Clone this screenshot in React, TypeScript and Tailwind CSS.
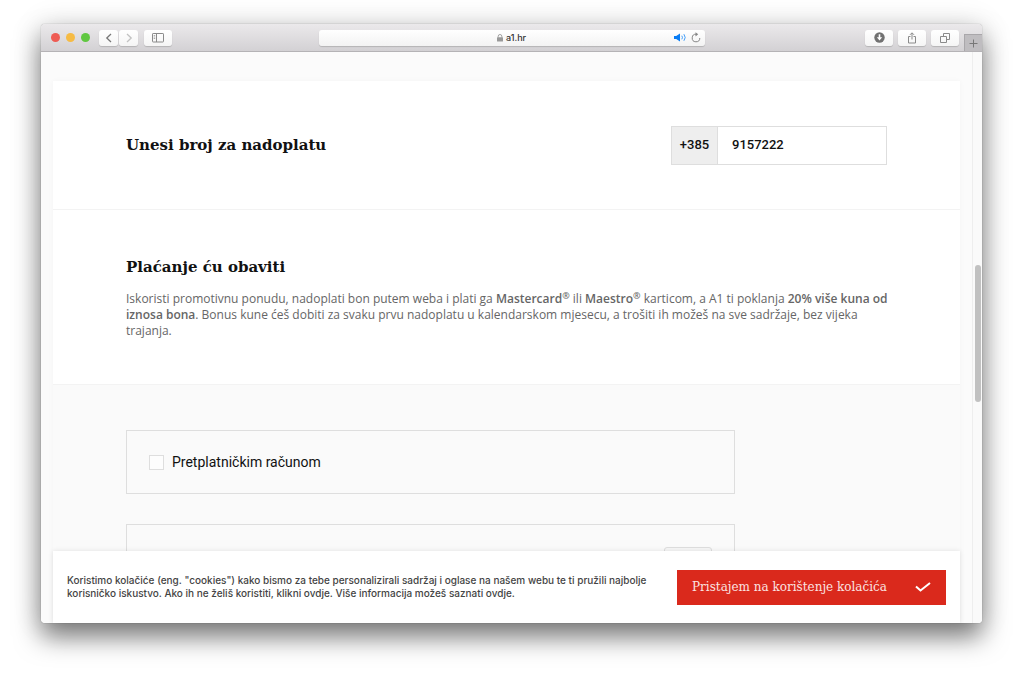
/* A1 top-up page shown inside a desktop browser window */
import { useState } from 'react';
import type { ReactNode } from 'react';

interface ToolbarButtonProps {
  label: string;
  className?: string;
  children: ReactNode;
}

function ToolbarButton({ label, className = 'w-7', children }: ToolbarButtonProps) {
  return (
    <button
      type="button"
      aria-label={label}
      className={`flex h-4 items-center justify-center rounded-[3px] bg-linear-to-b from-white to-[#f5f5f5] text-[#8a8a8a] shadow-[0_1px_1px_rgba(0,0,0,0.16)] ${className}`}
    >
      {children}
    </button>
  );
}

function Toolbar() {
  return (
    <header className="relative grid h-7 shrink-0 grid-cols-[1fr_386px_1fr] items-center rounded-t-[4px] border-b border-[#b5b3b6] bg-linear-to-b from-[#ebe9eb] to-[#d3d1d4]">
      {/* Window controls and history */}
      <div className="flex items-center pl-[10px]">
        <div className="flex gap-[6px]">
          <span className="size-[9px] rounded-full bg-[#ee5b53]"></span>
          <span className="size-[9px] rounded-full bg-[#f6bb44]"></span>
          <span className="size-[9px] rounded-full bg-[#60c741]"></span>
        </div>
        <div className="ml-[9px] flex gap-px">
          <ToolbarButton label="Back" className="w-[19px]">
            <svg width="8" height="10" viewBox="0 0 8 10" fill="none" stroke="#777" strokeWidth="1.3">
              <path d="M6 1 1.8 5 6 9" />
            </svg>
          </ToolbarButton>
          <ToolbarButton label="Forward" className="w-[19px]">
            <svg width="8" height="10" viewBox="0 0 8 10" fill="none" stroke="#c2c2c2" strokeWidth="1.3">
              <path d="M2 1 6.200 5 2 9" />
            </svg>
          </ToolbarButton>
        </div>
        <div className="ml-[6px] flex">
          <ToolbarButton label="Sidebar">
            <svg width="12" height="10" viewBox="0 0 12 10" fill="none" stroke="currentColor">
              <rect x="0.5" y="0.5" width="11" height="8.500" rx="0.6" />
              <path d="M4.500 0.500v8.500" />
              <path d="M1.700 2.500h1.500M1.700 4h1.500M1.700 5.500h1.500" strokeWidth="0.7" />
            </svg>
          </ToolbarButton>
        </div>
      </div>

      {/* Address field */}
      <div className="relative flex h-4 items-center justify-center gap-[3px] rounded-[3px] bg-linear-to-b from-white to-[#f3f3f3] font-['Inter',sans-serif] text-[9px] font-medium text-[#333] shadow-[0_1px_1px_rgba(0,0,0,0.16)]">
        <svg width="6" height="8" viewBox="0 0 6 8">
          <rect y="3.200" width="6" height="4.300" rx="0.5" fill="#999" />
          <path d="M1.200 3.500V2.300a1.800 1.800 0 0 1 3.600 0v1.200" fill="none" stroke="#999" strokeWidth="0.9" />
        </svg>
        <span>a1.hr</span>
        <div className="absolute right-1 flex items-center gap-1">
          <svg width="13" height="9" viewBox="0 0 13 9" fill="none" stroke="#2d93f8">
            <path d="M0 3h2.200L6 0.600v7.800L2.200 6H0z" fill="#0a7df5" stroke="none" />
            <path d="M7.800 2.700q1.300 1.800 0 3.600M9.900 1.200q2.600 3.300 0 6.600" strokeWidth="0.9" />
          </svg>
          <svg width="10" height="11" viewBox="0 0 10 11" fill="none" stroke="#858585">
            <path d="M5.300 2.200A3.800 3.800 0 1 0 8.800 6" />
            <path d="M4.500 0.200 7.200 2.300 4.500 4.400z" fill="#858585" stroke="none" />
          </svg>
        </div>
      </div>

      {/* Downloads, share and tabs */}
      <div className="flex items-center justify-end gap-[5px] pr-[23px]">
        <ToolbarButton label="Downloads">
          <svg width="11" height="11" viewBox="0 0 11 11">
            <circle cx="5.500" cy="5.500" r="5.200" fill="#717171" />
            <path d="M4.700 2.300h1.600v3h1.900L5.500 8.500 2.800 5.300h1.900z" fill="#fff" />
          </svg>
        </ToolbarButton>
        <ToolbarButton label="Share">
          <svg width="10" height="12" viewBox="0 0 10 12" fill="none" stroke="currentColor">
            <path d="M3.500 4.500h-2v6.500h7v-6.500h-2M5 7.500V1M3 2.800 5 0.800l2 2" />
          </svg>
        </ToolbarButton>
        <ToolbarButton label="Tabs">
          <svg width="10" height="10" viewBox="0 0 10 10" fill="none" stroke="currentColor">
            <path d="M0.500 3.500h6v6h-6zM3.500 3.500v-3h6v6h-3" />
          </svg>
        </ToolbarButton>
      </div>
      <button
        type="button"
        aria-label="New tab"
        className="absolute right-0 bottom-0 flex h-[17px] w-[18px] items-center justify-center border-t border-l border-[#a9a7aa] bg-[#bfbdc0] text-[#777]"
      >
        <svg width="9" height="9" viewBox="0 0 9 9" stroke="currentColor">
          <path d="M4.500 0.500v8M0.500 4.500h8" />
        </svg>
      </button>
    </header>
  );
}

function PhoneSection() {
  const [phone, setPhone] = useState('9157222');

  return (
    <section className="flex h-32 items-center justify-between">
      <label htmlFor="phone" className="font-['DejaVu_Serif',serif] text-[15px] leading-6 font-bold">
        Unesi broj za nadoplatu
      </label>
      <div className="flex h-[39px] w-[216px] border border-[#dedede] font-['Roboto',sans-serif] text-[13px] font-medium">
        <span className="flex w-[46px] items-center justify-center border-r border-[#dedede] bg-[#eeeeee]">+385</span>
        <input
          id="phone"
          type="tel"
          value={phone}
          onChange={(e) => setPhone(e.target.value)}
          className="min-w-0 flex-1 bg-white px-[14px] outline-none"
        />
      </div>
    </section>
  );
}

function PaymentIntro() {
  return (
    <section className="h-[174px] pt-[45px]">
      <h2 className="font-['DejaVu_Serif',serif] text-[15px] leading-6 font-bold">Plaćanje ću obaviti</h2>
      <p className="mt-3 font-['Open_Sans',sans-serif] text-[12px] leading-4 whitespace-nowrap text-[#666]">
        Iskoristi promotivnu ponudu, nadoplati bon putem weba i plati ga{' '}
        <b className="font-semibold">Mastercard<sup className="text-[9px]">®</sup></b> ili{' '}
        <b className="font-semibold">Maestro<sup className="text-[9px]">®</sup></b> karticom, a A1 ti poklanja{' '}
        <b className="font-semibold">20% više kuna od</b>
        <br />
        <b className="font-semibold">iznosa bona</b>. Bonus kune ćeš dobiti za svaku prvu nadoplatu u kalendarskom
        mjesecu, a trošiti ih možeš na sve sadržaje, bez vijeka
        <br />
        trajanja.
      </p>
    </section>
  );
}

function PaymentOptions() {
  return (
    <section className="flex flex-col gap-[30px] pt-[45px]">
      <label className="flex h-16 w-4/5 items-center gap-2 border border-[#dedede] pl-[22px] font-['Roboto',sans-serif] text-sm">
        <input type="checkbox" className="size-[15px] appearance-none border border-[#dedede] bg-[#fdfdfd]" />
        Pretplatničkim računom
      </label>
      <div className="flex h-28 w-4/5 justify-end border border-[#dedede] pt-[22px] pr-[22px]">
        <div className="h-8 w-12 rounded-[3px] border border-[#dedede] bg-[#f7f7f7]"></div>
      </div>
    </section>
  );
}

function CookieBar() {
  return (
    <div className="absolute right-[22px] bottom-0 left-3 flex h-[72px] items-center justify-between bg-white px-[14px] shadow-[0_0_5px_rgba(0,0,0,0.1)]">
      <p className="font-['Inter',sans-serif] text-[10px] leading-[13px] font-medium whitespace-nowrap text-[#444]">
        Koristimo kolačiće (eng. "cookies") kako bismo za tebe personalizirali sadržaj i oglase na našem webu te ti pružili najbolje
        <br />
        korisničko iskustvo. Ako ih ne želiš koristiti, klikni ovdje. Više informacija možeš saznati ovdje.
      </p>
      <button
        type="button"
        className="flex h-[35px] w-[269px] shrink-0 items-center justify-between bg-[#da291c] px-[15px] font-['DejaVu_Serif',serif] text-[12px] whitespace-nowrap text-[#fbe3e1]"
      >
        Pristajem na korištenje kolačića
        <svg width="16" height="11" viewBox="0 0 16 11" fill="none" stroke="#fff" strokeWidth="2">
          <path d="M1 4.500 5.500 8.500 15 1" />
        </svg>
      </button>
    </div>
  );
}

export default function App() {
  return (
    <main className="flex h-screen flex-col bg-white pt-6 pr-[42px] pb-[59px] pl-[41px] text-[#111]">
      <div className="flex min-h-0 flex-1 flex-col rounded-[4px] shadow-[0_0_1px_rgba(0,0,0,0.5),0_0_30px_rgba(0,0,0,0.12),0_14px_26px_rgba(0,0,0,0.5)]">
        <Toolbar />
        <div className="relative flex min-h-0 flex-1 overflow-hidden rounded-b-[4px] bg-[#fbfbfb] pl-3">
          {/* Page content */}
          <div className="min-w-0 flex-1 pt-[29px]">
            <div className="bg-[#fafafa] shadow-[0_0_6px_rgba(0,0,0,0.03)]">
              <div className="border-b border-[#f3f3f3] bg-white px-[73px]">
                <PhoneSection />
              </div>
              <div className="border-b border-[#f3f3f3] bg-white px-[73px]">
                <PaymentIntro />
              </div>
              <div className="px-[73px]">
                <PaymentOptions />
              </div>
            </div>
          </div>
          {/* Scrollbar */}
          <div className="ml-3 flex w-[10px] justify-center border-l border-[#eeeeee] bg-[#fafafa] pt-[213px]">
            <div className="h-[137px] w-[6px] rounded-full bg-[#c1c1c1]"></div>
          </div>
          <CookieBar />
        </div>
      </div>
    </main>
  );
}
